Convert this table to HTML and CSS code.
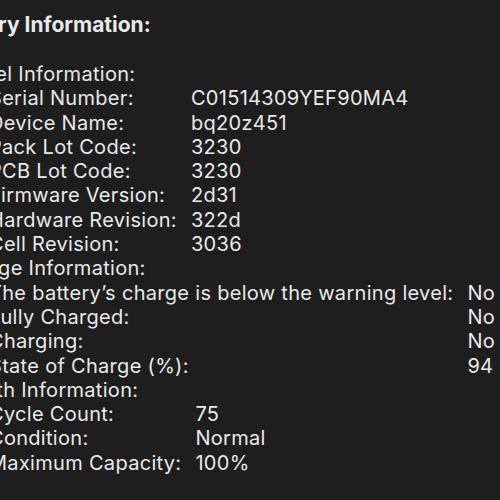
FILE: index.html
```html
<!DOCTYPE html>
<html>
<head>
<meta charset="utf-8">
<link rel="stylesheet" href="styles.css">
</head>
<body>
<div class="sheet">
  <h1 class="title">Battery Information:</h1>
  <section class="group">
    <div class="group-head">Model Information:</div>
    <div class="rows rows-model">
      <span class="label">Serial Number:</span><span class="value">C01514309YEF90MA4</span>
      <span class="label">Device Name:</span><span class="value">bq20z451</span>
      <span class="label">Pack Lot Code:</span><span class="value">3230</span>
      <span class="label">PCB Lot Code:</span><span class="value">3230</span>
      <span class="label">Firmware Version:</span><span class="value">2d31</span>
      <span class="label">Hardware Revision:</span><span class="value">322d</span>
      <span class="label">Cell Revision:</span><span class="value">3036</span>
    </div>
  </section>
  <section class="group">
    <div class="group-head">Charge Information:</div>
    <div class="rows rows-charge">
      <span class="label">The battery’s charge is below the warning level:</span><span class="value">No</span>
      <span class="label">Fully Charged:</span><span class="value">No</span>
      <span class="label">Charging:</span><span class="value">No</span>
      <span class="label">State of Charge (%):</span><span class="value">94</span>
    </div>
  </section>
  <section class="group">
    <div class="group-head">Health Information:</div>
    <div class="rows rows-health">
      <span class="label">Cycle Count:</span><span class="value">75</span>
      <span class="label">Condition:</span><span class="value">Normal</span>
      <span class="label">Maximum Capacity:</span><span class="value">100%</span>
    </div>
  </section>
</div>
</body>
</html>
```

FILE: styles.css
```css
html, body {
  margin: 0;
  padding: 0;
  width: 500px;
  height: 500px;
  overflow: hidden;
  background: #1e1e1e;
}

.sheet {
  margin-left: -55px;
  padding-top: 11px;
  font-family: Inter, "Noto Sans", sans-serif;
  color: #e9e9e9;
  white-space: nowrap;
}

.title {
  margin: 0 0 23px 0;
  font-size: 21px;
  line-height: 28px;
  font-weight: 700;
}

.group {
  margin-left: 7px;
  font-size: 20px;
  letter-spacing: 0.3px;
  line-height: 24.3px;
}

.group-head {
  margin: 0;
}

.rows {
  display: grid;
  grid-template-columns: auto auto;
  justify-content: start;
  column-gap: 14px;
  margin-left: 37px;
}
```
